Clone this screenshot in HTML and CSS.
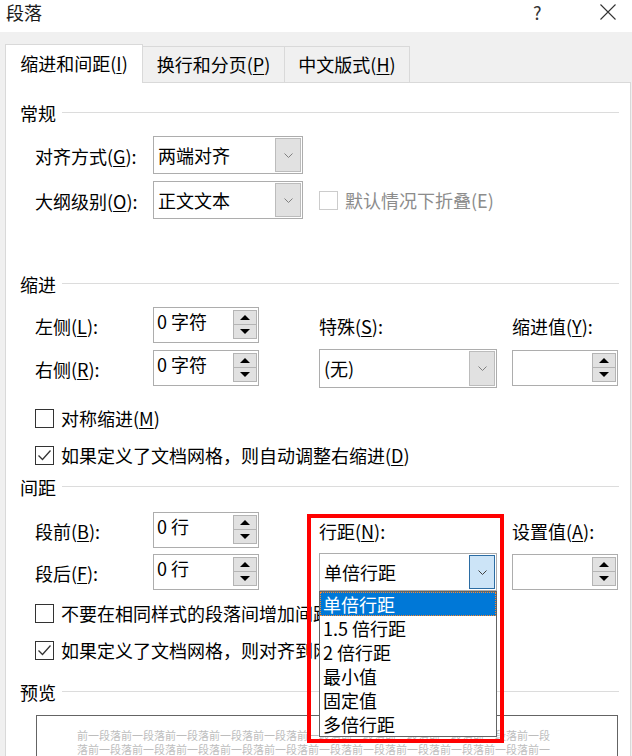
FILE: index.html
```html
<!DOCTYPE html>
<html lang="zh-CN">
<head>
<meta charset="utf-8">
<title>段落</title>
<link rel="stylesheet" href="styles.css">
</head>
<body>
<div class="window">
  <div class="titlebar">
    <span class="title">段落</span>
    <span class="help">?</span>
    <span class="close"><svg width="16" height="16" viewBox="0 0 16 16"><path d="M0.5 0.5L15.5 15.5M15.5 0.5L0.5 15.5" stroke="#333" stroke-width="1.1" fill="none"/></svg></span>
  </div>
  <div class="client">
    <div class="tabs">
      <div class="tab active t1">缩进和间距(<u>I</u>)</div>
      <div class="tab t2">换行和分页(<u>P</u>)</div>
      <div class="tab t3">中文版式(<u>H</u>)</div>
    </div>
    <div class="panel">
      <div class="group-head gh-general"><span>常规</span><i class="rule"></i></div>
      <div class="form form-general">
        <div class="lbl">对齐方式(<u>G</u>):</div>
        <div class="combo"><span class="val">两端对齐</span><span class="arrow"><svg width="9" height="5" viewBox="0 0 9 5"><path d="M0.5 0.5L4.5 4.5L8.5 0.5" fill="none" stroke="#808080"/></svg></span></div>
        <div></div>
        <div class="lbl">大纲级别(<u>O</u>):</div>
        <div class="combo"><span class="val">正文文本</span><span class="arrow"><svg width="9" height="5" viewBox="0 0 9 5"><path d="M0.5 0.5L4.5 4.5L8.5 0.5" fill="none" stroke="#808080"/></svg></span></div>
        <div class="check disabled"><span class="box"></span><span>默认情况下折叠(E)</span></div>
      </div>

      <div class="group-head gh-indent"><span>缩进</span><i class="rule"></i></div>
      <div class="form form-six form-indent">
        <div class="lbl c1">左侧(<u>L</u>):</div>
        <div class="spin c2"><span class="val">0 字符</span><span class="btns"><span class="up"></span><span class="dn"></span></span></div>
        <div class="lbl c4">特殊(<u>S</u>):</div>
        <div class="lbl c6">缩进值(<u>Y</u>):</div>
        <div class="lbl c1">右侧(<u>R</u>):</div>
        <div class="spin c2"><span class="val">0 字符</span><span class="btns"><span class="up"></span><span class="dn"></span></span></div>
        <div class="combo tall c4"><span class="val">(无)</span><span class="arrow"><svg width="9" height="5" viewBox="0 0 9 5"><path d="M0.5 0.5L4.5 4.5L8.5 0.5" fill="none" stroke="#808080"/></svg></span></div>
        <div class="spin c6"><span class="val"></span><span class="btns"><span class="up"></span><span class="dn"></span></span></div>
      </div>
      <div class="check ck1"><span class="box"></span><span>对称缩进(<u>M</u>)</span></div>
      <div class="check ck2"><span class="box"><svg width="17" height="17" viewBox="0 0 17 17"><path d="M2.5 8.5L6.5 12.5L14.5 3.5" fill="none" stroke="#333" stroke-width="1.3"/></svg></span><span>如果定义了文档网格，则自动调整右缩进(<u>D</u>)</span></div>

      <div class="group-head gh-spacing"><span>间距</span><i class="rule"></i></div>
      <div class="form form-six form-spacing">
        <div class="lbl c1">段前(<u>B</u>):</div>
        <div class="spin c2"><span class="val">0 行</span><span class="btns"><span class="up"></span><span class="dn"></span></span></div>
        <div class="lbl c4">行距(<u>N</u>):</div>
        <div class="lbl c6">设置值(<u>A</u>):</div>
        <div class="lbl c1">段后(<u>F</u>):</div>
        <div class="spin c2"><span class="val">0 行</span><span class="btns"><span class="up"></span><span class="dn"></span></span></div>
        <div class="combo open c4"><span class="val">单倍行距</span><span class="arrow"><svg width="9" height="5" viewBox="0 0 9 5"><path d="M0.5 0.5L4.5 4.5L8.5 0.5" fill="none" stroke="#404040"/></svg></span></div>
        <div class="spin c6"><span class="val"></span><span class="btns"><span class="up"></span><span class="dn"></span></span></div>
      </div>
      <div class="check ck3"><span class="box"></span><span>不要在相同样式的段落间增加间距(<u>C</u>)</span></div>
      <div class="check ck4"><span class="box"><svg width="17" height="17" viewBox="0 0 17 17"><path d="M2.5 8.5L6.5 12.5L14.5 3.5" fill="none" stroke="#333" stroke-width="1.3"/></svg></span><span>如果定义了文档网格，则对齐到网格(<u>W</u>)</span></div>

      <div class="group-head gh-preview"><span>预览</span><i class="rule"></i></div>
      <div class="preview">
        <div class="ptext">前一段落前一段落前一段落前一段落前一段落前一段落前一段落前一段落前一段落前一段落前一段</div>
        <div class="ptext">落前一段落前一段落前一段落前一段落前一段落前一段落前一段落前一段落前一段落前一段落前一</div>
      </div>
    </div>
  </div>

  <div class="droplist">
    <div class="item selected">单倍行距</div>
    <div class="item">1.5 倍行距</div>
    <div class="item">2 倍行距</div>
    <div class="item">最小值</div>
    <div class="item">固定值</div>
    <div class="item">多倍行距</div>
  </div>
  <div class="highlight"></div>
</div>
</body>
</html>
```

FILE: styles.css
```css
* { box-sizing: border-box; }
html, body { margin: 0; padding: 0; }
body {
  width: 632px;
  height: 756px;
  overflow: hidden;
  background: #f0f0f0;
  font-family: "Noto Sans CJK SC", "Microsoft YaHei", "Noto Sans", sans-serif;
  font-size: 18px;
  color: #000;
}
u { text-decoration: underline; text-underline-offset: 2px; text-decoration-thickness: 1px; }

.window {
  position: relative;
  width: 632px;
  height: 756px;
  overflow: hidden;
  background: #f0f0f0;
}

/* title bar */
.titlebar {
  height: 32px;
  background: #fff;
  display: flex;
  align-items: flex-start;
}
.title { margin-left: 6px; line-height: 24px; color: #1a1a1a; }
.help { margin-left: auto; width: 12px; margin-right: 55px; line-height: 24px; color: #333; }
.close { width: 16px; height: 16px; margin-top: 4px; margin-right: 16px; display: block; }
.close svg { display: block; }

/* tabs */
.client { padding-top: 12px; }
.tabs {
  display: flex;
  align-items: flex-start;
  margin-left: 5px;
  height: 39px;
  position: relative;
  z-index: 1;
}
.tab {
  height: 36px;
  margin-top: 2px;
  border-top: 1px solid #d9d9d9;
  border-right: 1px solid #d9d9d9;
  background: #f0f0f0;
  text-align: center;
  line-height: 34px;
  white-space: nowrap;
}
.tab.active {
  height: 39px;
  margin-top: 0;
  background: #fff;
  border-left: 1px solid #d9d9d9;
  line-height: 37px;
}
.t1 { width: 138px; }
.t2 { width: 142px; }
.t3 { width: 125px; }

/* panel */
.panel {
  margin-top: -1px;
  margin-left: 5px;
  width: 626px;
  height: 700px;
  background: #fff;
  border: 1px solid #d9d9d9;
  border-bottom: none;
  overflow: hidden;
}
.group-head {
  display: flex;
  align-items: center;
  height: 24px;
  line-height: 24px;
  margin-left: 14px;
  margin-right: 11px;
}
.group-head .rule {
  flex: 1;
  height: 1px;
  background: #dcdcdc;
  margin-left: 6px;
  margin-top: -1px;
}
.gh-general { margin-top: 18px; }
.gh-indent { margin-top: 53px; }
.gh-spacing { margin-top: 8px; }
.gh-preview { margin-top: 18px; }

.form { margin-left: 29px; display: grid; }
.form-general {
  grid-template-columns: 118px 150px auto;
  grid-template-rows: 38px 38px;
  row-gap: 7px;
  margin-top: 11px;
}
.form-six {
  grid-template-columns: 118px 106px 60px 178px 15px 106px;
  grid-template-rows: 36px 36px;
}
.form-indent { row-gap: 7px; margin-top: 11px; }
.form-spacing { row-gap: 6px; margin-top: 13px; }
.c1 { grid-column: 1; }
.c2 { grid-column: 2; }
.c4 { grid-column: 4; }
.c6 { grid-column: 6; }

.lbl {
  align-self: center;
  line-height: 24px;
  padding-top: 2px;
  white-space: nowrap;
}

/* combo box */
.combo {
  display: flex;
  height: 38px;
  border: 1px solid #adadad;
  background: #fff;
}
.combo.tall { height: 39px; margin-top: -1px; }
.combo.open { height: 38px; margin-top: -1px; }
.combo .val {
  flex: 1;
  padding-left: 4px;
  line-height: 36px;
  white-space: nowrap;
}
.combo .arrow {
  width: 26px;
  margin: 1px 1px 1px 0;
  background: #e1e1e1;
  border: 1px solid #bcbcbc;
  display: flex;
  align-items: center;
  justify-content: center;
}
.combo .arrow svg { display: block; }
.combo.open .arrow {
  background: #cce4f7;
  border-color: #2b6ca3;
}

/* spinner */
.spin {
  display: flex;
  height: 36px;
  border: 1px solid #adadad;
  background: #fff;
}
.spin .val {
  flex: 1;
  padding: 1px 0 0 3px;
  line-height: 24px;
  white-space: nowrap;
}
.btns {
  width: 24px;
  margin: 2px 1px 3px 0;
  display: flex;
  flex-direction: column;
}
.btns .up, .btns .dn {
  flex: 1;
  background: #e1e1e1;
  border: 1px solid #b4b4b4;
  display: flex;
  align-items: center;
  justify-content: center;
}
.btns .dn { margin-top: -1px; }
.btns .up::before {
  content: "";
  width: 0;
  height: 0;
  border-left: 5px solid transparent;
  border-right: 5px solid transparent;
  border-bottom: 5px solid #000;
}
.btns .dn::before {
  content: "";
  width: 0;
  height: 0;
  border-left: 5px solid transparent;
  border-right: 5px solid transparent;
  border-top: 5px solid #000;
}

/* checkbox */
.check {
  display: flex;
  align-items: center;
  height: 24px;
  line-height: 24px;
  white-space: nowrap;
}
.check .box {
  flex: none;
  width: 19px;
  height: 19px;
  border: 1px solid #333;
  background: #fff;
  margin-right: 7px;
}
.check .box svg { display: block; }
.check.disabled { align-self: center; margin-left: 16px; color: #8c8c8c; }
.check.disabled .box { border-color: #cccccc; }
.ck1 { margin-left: 29px; margin-top: 20px; }
.ck2 { margin-left: 29px; margin-top: 13px; }
.ck3 { margin-left: 29px; margin-top: 11px; }
.ck4 { margin-left: 29px; margin-top: 13px; }

/* preview */
.preview {
  margin-top: 11px;
  margin-left: 30px;
  width: 582px;
  height: 120px;
  border: 1px solid #646464;
  padding: 12px 0 0 40px;
}
.ptext {
  font-size: 11px;
  line-height: 14px;
  color: #bdbdbd;
  white-space: nowrap;
}

/* open drop-down list and annotation frame (overlays) */
.droplist {
  position: absolute;
  left: 319px;
  top: 591px;
  width: 178px;
  height: 146px;
  border: 1px solid #646464;
  background: #fff;
  z-index: 5;
}
.droplist .item {
  height: 24px;
  line-height: 24px;
  padding-left: 3px;
  white-space: nowrap;
}
.droplist .item.selected {
  background: #0078d7;
  color: #fff;
  outline: 1px dotted #ff8728;
  outline-offset: -1px;
}
.highlight {
  position: absolute;
  left: 307px;
  top: 514px;
  width: 197px;
  height: 229px;
  border: 4px solid #ff0000;
  z-index: 6;
}
```
